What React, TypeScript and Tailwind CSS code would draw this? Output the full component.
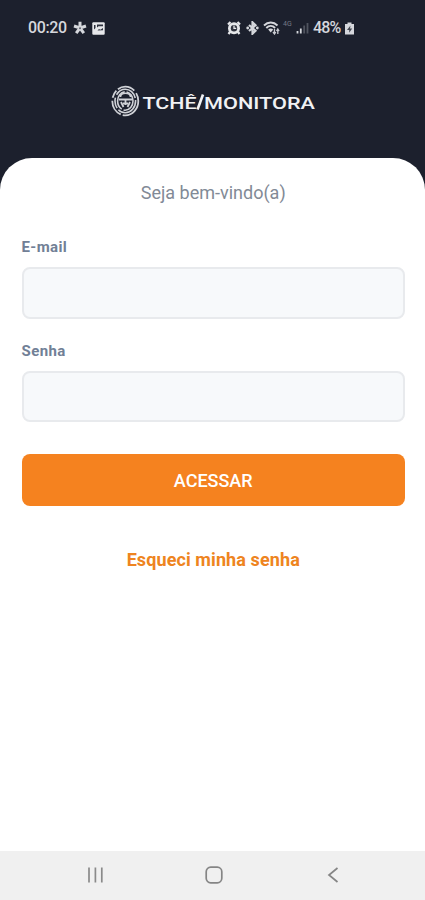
import React from "react";
import { useState } from "react";

function StatusBar() {
  return (
    <div className="flex h-14 items-center justify-between pl-[28px] pr-[70px] text-[#d5d7dc]">
      <div className="flex items-center">
        <span className="w-[40px] text-[16px] font-medium tracking-[-0.4px]">00:20</span>
        <svg width="14" height="14" viewBox="0 0 14 14" className="ml-[5px]">
          <path
            d="M7 0.8v6.2L1 5M7 7l6-2M7 7l-3.8 5.2M7 7l3.8 5.2"
            stroke="currentColor"
            strokeWidth="3"
            fill="none"
          />
          <circle cx="7" cy="7.2" r="1" fill="#5d616d" />
        </svg>
        <svg width="13" height="13" viewBox="0 0 13 13" className="ml-[5px]">
          <rect x="0.3" y="0.3" width="12.4" height="12.4" rx="1" fill="#e6e7ea" />
          <path d="M2 7.5V3h1.5v3zM5 2.5h6v1.8H6.5L5 5.5zM5.500 8.500L7 7l1.300.8L11 6v2.300z" fill="#2c303c" />
        </svg>
      </div>

      <div className="flex items-center">
        {/* Alarm */}
        <svg width="14" height="14" viewBox="0 0 14 14">
          <path
            d="M1 3.5L3.5 1M13 3.5L10.5 1M3 11l-1.5 2M11 11l1.5 2"
            stroke="#e6e7ea"
            strokeWidth="2.2"
          />
          <circle cx="7" cy="7.2" r="6" fill="#e6e7ea" />
          <circle cx="7" cy="7.2" r="3.2" fill="#31343f" />
          <path d="M7 4.5v2.9h2.2" stroke="#e6e7ea" strokeWidth="1.3" fill="none" />
        </svg>
        {/* Bluetooth */}
        <svg width="13" height="14" viewBox="0 0 13 14" className="ml-[5px]">
          <path
            d="M3 4l6.5 5.8L6.5 12.7V1.3l3 2.9L3 10"
            stroke="#d5d7dc"
            strokeWidth="2.2"
            fill="none"
          />
          <circle cx="1.7" cy="7" r="1.4" fill="#d5d7dc" />
          <circle cx="11.3" cy="7" r="1.4" fill="#d5d7dc" />
        </svg>
        {/* Wifi */}
        <svg width="17" height="14" viewBox="0 0 17 14" className="ml-[4px]">
          <path
            d="M1 4.5c4-4 9.5-4 13.5 0M3.3 7c2.6-2.6 6.2-2.6 8.8 0"
            stroke="#d5d7dc"
            strokeWidth="1.9"
            fill="none"
          />
          <path d="M5.2 8.6c1.5-1.4 3.5-1.4 5 0L7.7 11.5z" fill="#d5d7dc" />
          <path
            d="M11.5 8v4.5M10 11l1.500 2 1.300-2M14.800 13V8.500M13.500 10l1.300-2 1.300 2"
            stroke="#c9cbd1"
            strokeWidth="1.3"
            fill="none"
          />
        </svg>
        <span className="mb-[7px] ml-[3px] w-[9px] text-[7px] leading-none text-[#747985]">
          4G
        </span>
        {/* Signal */}
        <svg width="13" height="12" viewBox="0 0 13 12" className="ml-[4px]">
          <path d="M1.5 9v2.5M4.8 6.5v5" stroke="#d5d7dc" strokeWidth="1.8" />
          <path d="M8.2 3.5v8M11.5 1v10.5" stroke="#50545f" strokeWidth="1.8" />
        </svg>
        <span className="ml-[4px] w-[31px] text-[16px] font-medium tracking-[-0.8px]">48%</span>
        {/* Battery */}
        <svg width="11" height="13" viewBox="0 0 11 13">
          <path d="M3.5 0.5h4V2H10v10.500H1V2h2.500z" fill="#d5d7dc" />
          <path d="M6.5 3.5L3 8h2.2v2.7L8.2 6.5H6z" fill="#41454f" />
        </svg>
      </div>
    </div>
  );
}

function Logo() {
  return (
    <svg
      width="206"
      height="36"
      viewBox="110 84 206 36"
      className="font-['Roboto',sans-serif]"
      fill="#f1f2f4"
    >
      <g fill="none" stroke="#d0d2d7">
        <ellipse cx="125.3" cy="101" rx="13" ry="14.3" strokeWidth="1.8" strokeDasharray="24 2 17 3 8 2 18 3" />
        <ellipse cx="125.3" cy="101" rx="10.3" ry="11.8" strokeWidth="1.6" strokeDasharray="25 2 11 3" />
        <ellipse cx="125.3" cy="101" rx="7.7" ry="9.2" strokeWidth="1.6" strokeDasharray="15 2 22 2" />
        <path d="M120.5 97c0-5 10-5 10 0" strokeWidth="1.6" />
        <path d="M119 99.5h13M121 102l2.5 5M130 102l-2.5 5M125.5 99v6" strokeWidth="1.8" />
        <path d="M123 103.5h5" strokeWidth="2" />
      </g>
      <text x="142.5" y="109" fontSize="17" fontWeight="500" textLength="54" lengthAdjust="spacingAndGlyphs">
        TCHÊ
      </text>
      <path d="M197.5 109.500L203 94.500" stroke="#f1f2f4" strokeWidth="2.6" />
      <text x="204" y="109" fontSize="17" fontWeight="500" textLength="111" lengthAdjust="spacingAndGlyphs">
        MONITORA
      </text>
    </svg>
  );
}

function NavBar() {
  return (
    <nav className="flex h-[49px] items-center bg-[#f0f0f0] pb-[2px] pl-[37px] pr-[33px]">
      <button type="button" className="flex flex-1 justify-center">
        <svg width="16" height="18" viewBox="0 0 16 18" stroke="#8a8a8a" strokeWidth="1.7">
          <path d="M1 1.5v15M7.4 1.5v15M13.8 1.500v15" />
        </svg>
      </button>
      <button type="button" className="flex flex-1 justify-center">
        <svg width="18" height="18" viewBox="0 0 18 18" fill="none" stroke="#858585" strokeWidth="1.7">
          <rect x="1.2" y="1.2" width="15.6" height="15.6" rx="4.5" />
        </svg>
      </button>
      <button type="button" className="flex flex-1 justify-center">
        <svg width="12" height="18" viewBox="0 0 12 18" fill="none" stroke="#858585" strokeWidth="1.7">
          <path d="M10.5 2L2 9l8.5 7" />
        </svg>
      </button>
    </nav>
  );
}

function App() {
  const [formData, setFormData] = useState({
    email: "",
    password: "",
  });

  const { email, password } = formData;

  const onChange = (e: React.ChangeEvent<HTMLInputElement>) => {
    setFormData((prevState) => ({
      ...prevState,
      [e.target.name]: e.target.value,
    }));
  };

  const onSubmit = (e: React.SyntheticEvent) => {
    e.preventDefault();
  };

  return (
    <div className="flex h-screen w-full flex-col bg-[#1c202d] font-['Roboto',sans-serif]">
      <StatusBar />
      <header className="flex h-[102px] justify-center pt-[28px]">
        <Logo />
      </header>

      <main className="flex-1 rounded-t-[32px] bg-white pl-[21.5px] pr-5 pt-[21px]">
        <h1 className="text-center text-[18px] leading-7 text-[#828a96]">
          Seja bem-vindo(a)
        </h1>

        <form onSubmit={onSubmit} className="flex flex-col">
          {/* Email */}
          <label htmlFor="email" className="mt-[30px] text-[15px] font-bold leading-5 tracking-[0.4px] text-[#718096]">
            E-mail
          </label>
          <input
            type="text"
            id="email"
            name="email"
            value={email}
            onChange={onChange}
            className="mt-[10px] h-[52px] rounded-lg border-2 border-[#e8eaed] bg-[#f7f9fb] px-4 outline-none"
          />

          {/* Password */}
          <label htmlFor="password" className="mt-[22px] text-[15px] font-bold leading-5 tracking-[0.4px] text-[#718096]">
            Senha
          </label>
          <input
            type="password"
            id="password"
            name="password"
            value={password}
            onChange={onChange}
            className="mt-[10px] h-[51px] rounded-lg border-2 border-[#e8eaed] bg-[#f7f9fb] px-4 outline-none"
          />

          <button
            type="submit"
            className="mt-8 h-[52px] rounded-lg bg-[#f5821f] text-[18px] font-medium text-white"
          >
            ACESSAR
          </button>
        </form>

        <button
          type="button"
          className="mx-auto mt-[42px] block text-[18px] font-bold leading-6 tracking-[0.1px] text-[#ee8420]"
        >
          Esqueci minha senha
        </button>
      </main>

      <NavBar />
    </div>
  );
}

export default App;
